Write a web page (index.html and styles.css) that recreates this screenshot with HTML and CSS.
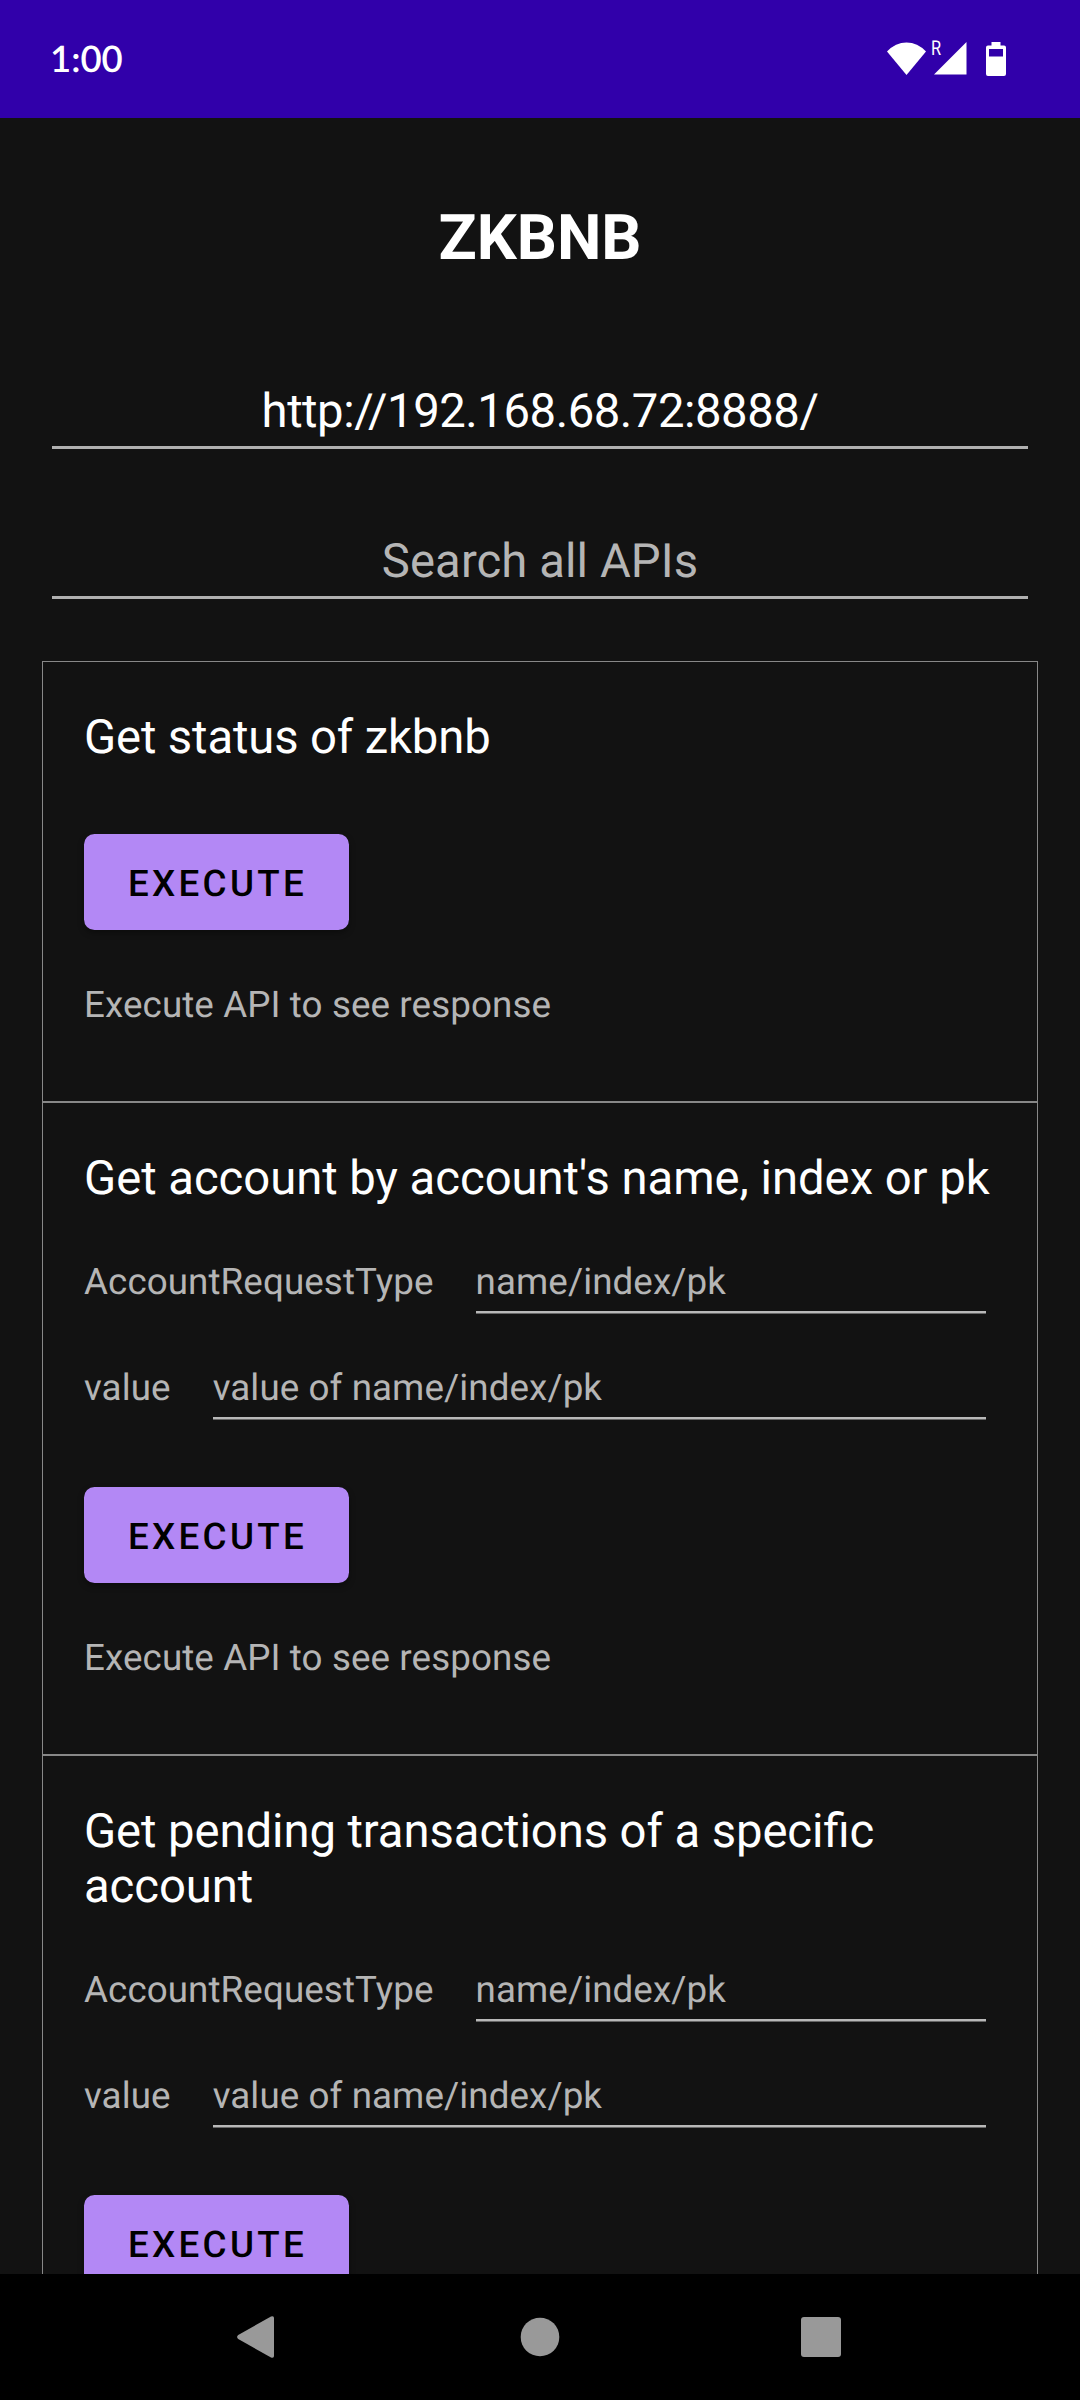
FILE: index.html
```html
<!DOCTYPE html>
<html lang="en">
<head>
<meta charset="utf-8">
<title>ZKBNB</title>
<link rel="stylesheet" href="styles.css">
</head>
<body>
<div class="screen">
  <header class="status-bar">
    <span class="clock">1:00</span>
    <div class="status-icons">
      <svg class="icon-wifi" viewBox="0 0 40 34" width="40" height="34"><path d="M20.500 33 L1 9.5 Q9.500 0.500 20.500 0.500 Q31.500 0.500 40 9.5 Z" fill="#fff"/></svg>
      <div class="signal">
        <span class="roaming">R</span>
        <svg viewBox="0 0 33 33" width="33" height="33"><path d="M32.5 0 V32.5 H0 Z" fill="#fff"/></svg>
      </div>
      <svg class="icon-battery" viewBox="0 0 20 34" width="20" height="34"><path fill-rule="evenodd" d="M5.5 0 H14.500 V3.500 H18 Q20 3.500 20 5.500 V32 Q20 34 18 34 H2 Q0 34 0 32 V5.500 Q0 3.500 2 3.500 H5.500 Z M3 7 V14.500 H17 V7 Z" fill="#fff"/></svg>
    </div>
  </header>

  <main class="content">
    <h1 class="app-title">ZKBNB</h1>
    <div class="field field-url">http://192.168.68.72:8888/</div>
    <div class="field field-search">Search all APIs</div>

    <div class="api-list">
      <section class="api">
        <h2 class="api-title title-status">Get status of zkbnb</h2>
        <button class="execute execute-only">Execute</button>
        <p class="response">Execute API to see response</p>
      </section>

      <section class="api">
        <h2 class="api-title title-account">Get account by account's name, index or pk</h2>
        <div class="params">
          <div class="param"><span class="label">AccountRequestType</span><div class="value">name/index/pk</div></div>
          <div class="param"><span class="label">value</span><div class="value">value of name/index/pk</div></div>
        </div>
        <button class="execute">Execute</button>
        <p class="response">Execute API to see response</p>
      </section>

      <section class="api">
        <h2 class="api-title title-pending">Get pending transactions of a specific account</h2>
        <div class="params">
          <div class="param"><span class="label">AccountRequestType</span><div class="value">name/index/pk</div></div>
          <div class="param"><span class="label">value</span><div class="value">value of name/index/pk</div></div>
        </div>
        <button class="execute">Execute</button>
      </section>
    </div>
  </main>

  <nav class="nav-bar">
    <svg viewBox="0 0 44 44" width="44" height="44"><path d="M34 1.500 Q37 0.500 37 3 V41 Q37 43.500 34 42.500 L1.200 24 Q-1 22 1.200 20 Z" fill="#999"/></svg>
    <svg viewBox="0 0 44 44" width="44" height="44"><circle cx="22" cy="22" r="19.300" fill="#999"/></svg>
    <svg viewBox="0 0 44 44" width="44" height="44"><rect x="2" y="2" width="40" height="40" rx="3" fill="#999"/></svg>
  </nav>
</div>
</body>
</html>
```
FILE: styles.css
```css
* {
  box-sizing: border-box;
}

body {
  margin: 0;
  background: #121212;
  font-family: Roboto, "Liberation Sans", sans-serif;
  text-rendering: geometricPrecision;
}

.screen {
  display: flex;
  flex-direction: column;
  width: 1080px;
  height: 2400px;
  overflow: hidden;
}

.status-bar {
  flex: none;
  display: flex;
  justify-content: space-between;
  height: 118px;
  padding: 36px 74px 0 50px;
  background: #3100aa;
  color: #fff;
}

.clock {
  font: 600 36.5px/44px Lato, sans-serif;
}

.status-icons {
  display: flex;
  align-items: flex-start;
  padding-top: 6px;
}

.signal {
  position: relative;
  width: 33px;
  height: 33px;
  margin: 0 19px 0 8px;
}

.signal svg {
  display: block;
}

.roaming {
  position: absolute;
  left: -3px;
  top: -5px;
  font-size: 20.5px;
  line-height: 24px;
  transform: scaleX(0.8);
  transform-origin: left;
}

.content {
  flex: 1;
  min-height: 0;
  overflow: hidden;
  padding: 84px 42px 0;
}

.app-title {
  margin: 0 0 108px;
  color: #fff;
  font-size: 63px;
  font-weight: 700;
  line-height: 74px;
  text-align: center;
}

.field {
  height: 65px;
  margin: 0 10px 85px;
  border-bottom: 3px solid #b0b0b0;
  color: #fff;
  font-size: 47.25px;
  line-height: 55px;
  text-align: center;
}

.field-url {
  letter-spacing: -0.46px;
}

.field-search {
  margin-bottom: 62px;
  color: #b5b5b5;
  letter-spacing: 0.08px;
}

.api {
  display: flex;
  flex-direction: column;
  align-items: flex-start;
  padding: 48px 41px 75px;
  border: 1px solid #888;
}

.api-title {
  margin: 0;
  color: #fff;
  font-size: 47.25px;
  font-weight: 400;
  font-feature-settings: "liga" 1;
  line-height: 55px;
}

.title-status {
  letter-spacing: -0.14px;
}

.title-account {
  letter-spacing: -0.04px;
}

.title-pending {
  letter-spacing: -0.09px;
}

.params {
  display: flex;
  flex-direction: column;
  align-self: stretch;
  gap: 52px;
  margin-top: 54px;
  padding-right: 10px;
}

.param {
  display: flex;
  gap: 42px;
  color: #b5b5b5;
  font-size: 36.75px;
  letter-spacing: 0.09px;
  line-height: 43px;
}

.value {
  flex: 1;
  height: 54px;
  background: linear-gradient(#b8b8b8 2px, #666 2px) bottom / 100% 3px no-repeat;
}

.execute {
  width: 265px;
  height: 96px;
  margin-top: 67px;
  padding: 2px 0 0 2px;
  border: 0;
  border-radius: 10.5px;
  background: #b388f5;
  box-shadow: 0 3px 6px rgba(0, 0, 0, 0.35);
  color: #000;
  font: 500 36.75px/43px Roboto, sans-serif;
  letter-spacing: 0.0892em;
  text-rendering: geometricPrecision;
  text-transform: uppercase;
}

.execute-only {
  margin-top: 69px;
}

.response {
  margin: 53px 0 0;
  color: #b5b5b5;
  font-size: 36.75px;
  letter-spacing: 0.1px;
  line-height: 43px;
}

.nav-bar {
  flex: none;
  display: flex;
  justify-content: center;
  gap: 237px;
  height: 126px;
  padding-top: 41px;
  background: #000;
}
```
